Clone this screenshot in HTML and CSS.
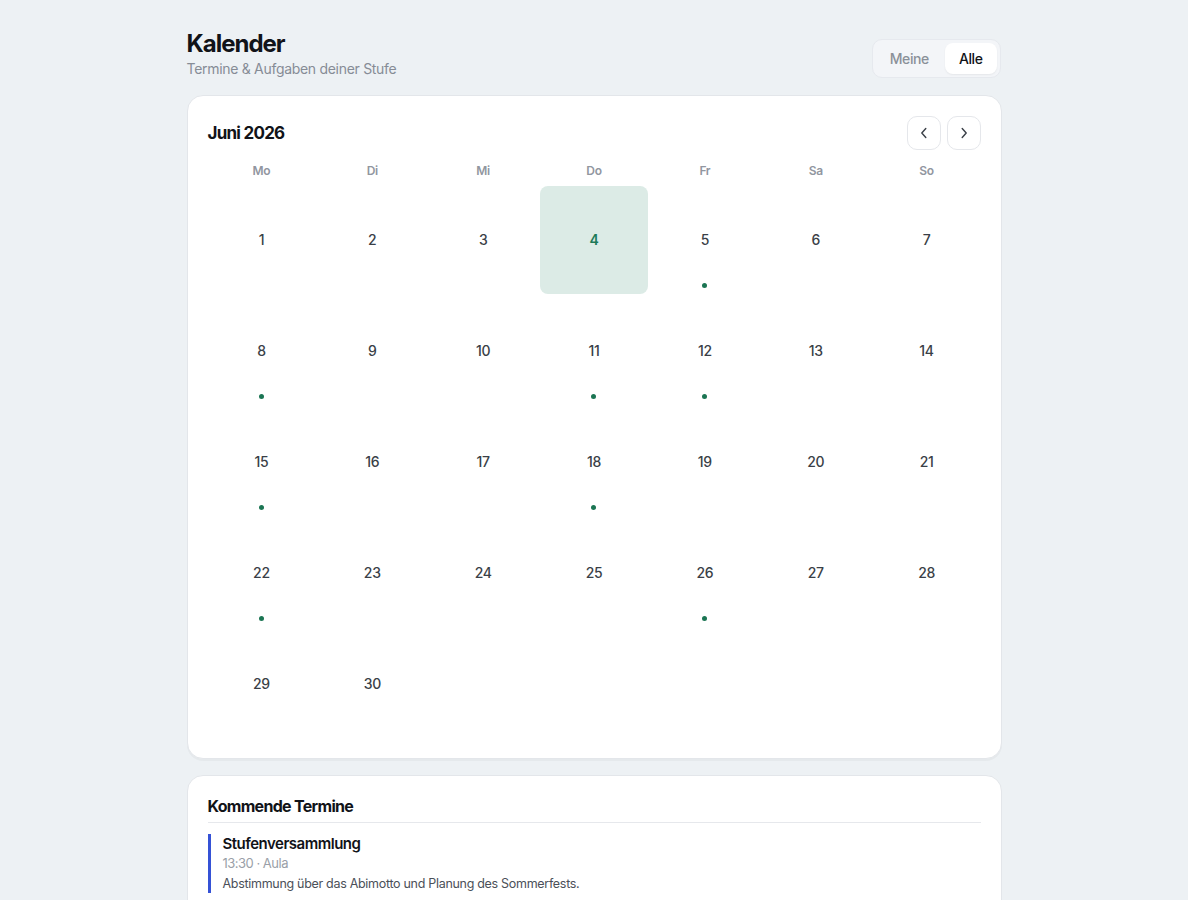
FILE: index.html
```html
<!DOCTYPE html>
<html lang="de">
<head>
<meta charset="utf-8">
<title>Kalender</title>
<link rel="stylesheet" href="styles.css">
</head>
<body>
<div class="page">
  <header class="top">
    <div class="titles">
      <h1 class="title">Kalender</h1>
      <p class="subtitle">Termine &amp; Aufgaben deiner Stufe</p>
    </div>
    <div class="toggle">
      <button class="tog">Meine</button>
      <button class="tog active">Alle</button>
    </div>
  </header>

  <section class="card cal">
    <div class="cal-head">
      <h2 class="month">Juni 2026</h2>
      <div class="nav">
        <button class="navbtn" aria-label="Zurück"><svg width="14" height="14" viewBox="0 0 14 14"><path d="M8.8 2.5 4.8 7l4 4.5" fill="none" stroke="#3a3f47" stroke-width="1.4" stroke-linecap="round" stroke-linejoin="round"/></svg></button>
        <button class="navbtn" aria-label="Weiter"><svg width="14" height="14" viewBox="0 0 14 14"><path d="M5.2 2.5 9.2 7l-4 4.5" fill="none" stroke="#3a3f47" stroke-width="1.4" stroke-linecap="round" stroke-linejoin="round"/></svg></button>
      </div>
    </div>
    <div class="wd">
      <span>Mo</span><span>Di</span><span>Mi</span><span>Do</span><span>Fr</span><span>Sa</span><span>So</span>
    </div>
    <div class="grid">
      <div class="day"><span class="num">1</span></div>
      <div class="day"><span class="num">2</span></div>
      <div class="day"><span class="num">3</span></div>
      <div class="day today"><span class="num">4</span></div>
      <div class="day"><span class="num">5</span><i class="dot"></i></div>
      <div class="day"><span class="num">6</span></div>
      <div class="day"><span class="num">7</span></div>

      <div class="day"><span class="num">8</span><i class="dot"></i></div>
      <div class="day"><span class="num">9</span></div>
      <div class="day"><span class="num">10</span></div>
      <div class="day"><span class="num">11</span><i class="dot"></i></div>
      <div class="day"><span class="num">12</span><i class="dot"></i></div>
      <div class="day"><span class="num">13</span></div>
      <div class="day"><span class="num">14</span></div>

      <div class="day"><span class="num">15</span><i class="dot"></i></div>
      <div class="day"><span class="num">16</span></div>
      <div class="day"><span class="num">17</span></div>
      <div class="day"><span class="num">18</span><i class="dot"></i></div>
      <div class="day"><span class="num">19</span></div>
      <div class="day"><span class="num">20</span></div>
      <div class="day"><span class="num">21</span></div>

      <div class="day"><span class="num">22</span><i class="dot"></i></div>
      <div class="day"><span class="num">23</span></div>
      <div class="day"><span class="num">24</span></div>
      <div class="day"><span class="num">25</span></div>
      <div class="day"><span class="num">26</span><i class="dot"></i></div>
      <div class="day"><span class="num">27</span></div>
      <div class="day"><span class="num">28</span></div>

      <div class="day"><span class="num">29</span></div>
      <div class="day"><span class="num">30</span></div>
    </div>
  </section>

  <section class="card upcoming">
    <h2 class="up-title">Kommende Termine</h2>
    <div class="event">
      <div class="ev-title">Stufenversammlung</div>
      <div class="ev-meta">13:30 · Aula</div>
      <div class="ev-desc">Abstimmung über das Abimotto und Planung des Sommerfests.</div>
    </div>
  </section>
</div>
</body>
</html>
```

FILE: styles.css
```css
* { box-sizing: border-box; }
html, body { margin: 0; padding: 0; }
body {
  background: #edf1f4;
  font-family: Inter, "Noto Sans", sans-serif;
  color: #111827;
}
.page {
  width: 815px;
  margin: 0 auto;
  padding-top: 29px;
}
.top {
  display: flex;
  justify-content: space-between;
  align-items: flex-end;
  margin-bottom: 17px;
}
.title {
  margin: 0;
  font-size: 24px;
  line-height: 30px;
  font-weight: 700;
  letter-spacing: -1px;
  color: #111318;
}
.subtitle {
  margin: 1px 0 0;
  font-size: 14px;
  line-height: 18px;
  letter-spacing: -0.3px;
  color: #868c96;
}
.toggle {
  display: flex;
  gap: 2px;
  padding: 3px;
  background: #f3f5f8;
  border: 1px solid #e6e9ee;
  border-radius: 10px;
  margin-bottom: 0;
  margin-right: 1px;
}
.tog {
  border: 0;
  background: transparent;
  font-family: inherit;
  font-size: 14px;
  font-weight: 500;
  letter-spacing: -0.4px;
  color: #8a9099;
  padding: 0 14px;
  height: 31px;
  border-radius: 8px;
}
.tog.active {
  background: #fff;
  color: #111318;
  box-shadow: 0 1px 2px rgba(0,0,0,0.06);
}
.card {
  background: #fff;
  border: 1px solid #e3e6ea;
  border-radius: 16px;
  box-shadow: 0 2px 0 rgba(0,0,0,0.03);
}
.cal {
  padding: 20px 20px 20px;
}
.cal-head {
  display: flex;
  justify-content: space-between;
  align-items: center;
  margin-bottom: 13px;
}
.month {
  margin: 0;
  font-size: 17px;
  font-weight: 700;
  letter-spacing: -0.75px;
  color: #111318;
}
.nav { display: flex; gap: 6px; }
.navbtn {
  width: 34px;
  height: 34px;
  border: 1px solid #e5e7eb;
  background: #fff;
  border-radius: 10px;
  display: flex;
  align-items: center;
  justify-content: center;
  padding: 0;
}
.wd {
  display: grid;
  grid-template-columns: repeat(7, 1fr);
  gap: 3px;
  font-size: 12px;
  line-height: 16px;
  font-weight: 600;
  letter-spacing: -0.3px;
  color: #9196a0;
  text-align: center;
  margin-bottom: 7px;
}
.grid {
  display: grid;
  grid-template-columns: repeat(7, 1fr);
  grid-auto-rows: 108px;
  gap: 3px;
}
.day {
  position: relative;
  display: flex;
  align-items: center;
  justify-content: center;
  border-radius: 8px;
  font-size: 14px;
  font-weight: 500;
  letter-spacing: -0.3px;
  color: #3a3f47;
}
.num { margin-top: -1px; }
.day.today {
  background: #dcebe6;
  color: #1d7a58;
  font-weight: 600;
}
.dot {
  position: absolute;
  left: 50%;
  bottom: 6px;
  width: 5px;
  height: 5px;
  margin-left: -2.5px;
  border-radius: 50%;
  background: #1b7553;
}
.upcoming {
  margin-top: 16px;
  padding: 20px 20px 0;
  border-bottom-left-radius: 0;
  border-bottom-right-radius: 0;
  height: 140px;
  overflow: hidden;
}
.up-title {
  margin: 0;
  font-size: 16px;
  font-weight: 700;
  line-height: 20px;
  letter-spacing: -0.7px;
  padding-bottom: 6px;
  border-bottom: 1px solid #e6e8ec;
  color: #111318;
}
.event {
  margin-top: 11px;
  border-left: 3px solid #3552d6;
  padding: 0 0 0 12px;
}
.ev-title {
  font-size: 15px;
  font-weight: 600;
  line-height: 20px;
  letter-spacing: -0.5px;
  color: #111318;
}
.ev-meta {
  font-size: 13px;
  line-height: 18px;
  letter-spacing: -0.5px;
  color: #9a9fa8;
}
.ev-desc {
  margin-top: 3px;
  font-size: 12.5px;
  line-height: 18px;
  letter-spacing: -0.3px;
  color: #4b5059;
}
```
